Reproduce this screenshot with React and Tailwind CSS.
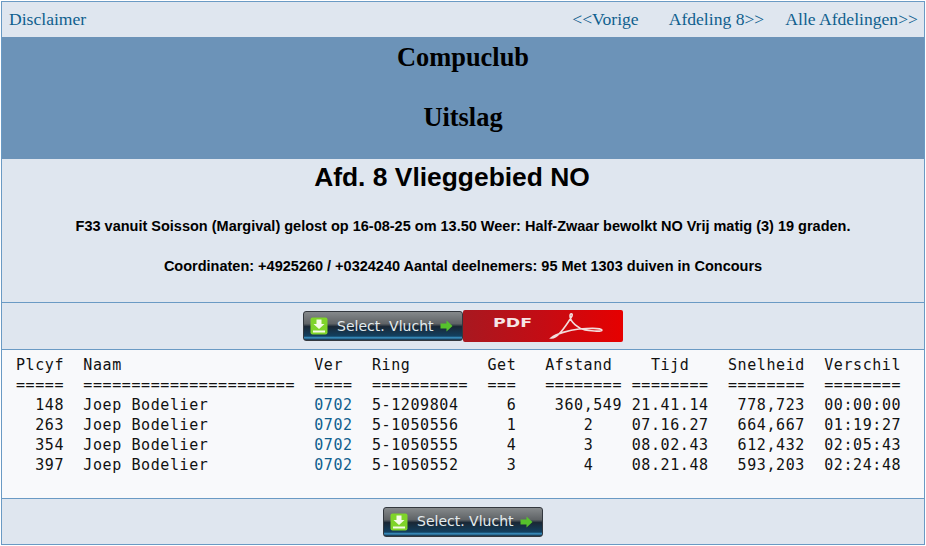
const font = { sans: "font-['Liberation_Sans',Arial,sans-serif]" };

function SelectButton() {
  return (
    <button className="flex h-[30px] w-[160px] items-center rounded-[3px] border border-[#33383e] bg-[linear-gradient(to_bottom,#85898b_0%,#5f6366_42%,#1a2735_52%,#124060_86%,#3a93c4_92%,#14283c_100%)] pl-[6px] font-['DejaVu_Sans',sans-serif] text-[14px] text-[#e3ebee]">
      <svg width="18" height="18" viewBox="0 0 18 18" className="shrink-0">
        <rect x="0.5" y="0.5" width="17" height="17" rx="2" fill="#7fd42a" />
        <path d="M6.5 2.5h5v4.5h3l-5.5 5-5.5-5h3z" fill="#f4fbe6" />
        <rect x="3" y="13.5" width="12" height="2" fill="#f4fbe6" />
      </svg>
      <span className="ml-[9px]">Select. Vlucht</span>
      <svg width="13" height="12" viewBox="0 0 13 12" className="ml-[6px] shrink-0">
        <path d="M0.5 3.5h6V0.5l6 5.5-6 5.5V8.5h-6z" fill="#56c22c" />
      </svg>
    </button>
  );
}

function PdfButton() {
  return (
    <div className="relative h-[32px] w-[160px] rounded-[2px] bg-[linear-gradient(to_right,#a81820,#c40c14_50%,#e60000)]">
      <span className="absolute left-[30px] top-[6px] origin-left scale-x-[1.45] font-['DejaVu_Sans',sans-serif] text-[12px] font-bold leading-[14px] text-[#f6e6e6]">PDF</span>
      <svg width="56" height="30" viewBox="0 0 56 30" className="absolute left-[86px] top-[2px]" fill="none" stroke="#f3dcdc" strokeWidth="1.6">
        <path d="M2 26C8 27 17 14 23 4 24 1 21 1 21 4 21 10 30 17 36 18 44 19 53 20 53 18 52 16 40 16 30 17 20 18 7 22 2 26Z" />
      </svg>
    </div>
  );
}

const rows = [
  ["  148  Joep Bodelier           ", "  5-1209804     6    360,549 21.41.14   778,723  00:00:00"],
  ["  263  Joep Bodelier           ", "  5-1050556     1       2    07.16.27   664,667  01:19:27"],
  ["  354  Joep Bodelier           ", "  5-1050555     4       3    08.02.43   612,432  02:05:43"],
  ["  397  Joep Bodelier           ", "  5-1050552     3       4    08.21.48   593,203  02:24:48"],
];

export default function App() {
  return (
    <div className="m-px flex h-[544px] w-[924px] flex-col border border-[#6a9ac4] bg-[#dfe6ef] text-black">
      <nav className="flex h-[35px] items-center justify-between pl-[7px] pr-[6px] font-['Liberation_Serif',serif] text-[17.6px] text-[#0f5f8e]">
        <a href="#">Disclaimer</a>
        <div className="flex gap-[30px]">
          <a href="#">&lt;&lt;Vorige</a>
          <a href="#">Afdeling 8&gt;&gt;</a>
          <a href="#" className="-ml-[9px]">Alle Afdelingen&gt;&gt;</a>
        </div>
      </nav>

      <header className="h-[122px] bg-[#6c93b8] pt-[4px] text-center font-['Liberation_Serif',serif] text-[26.4px] font-bold leading-[32px]">
        <h1>Compuclub</h1>
        <h2 className="mt-[28px]">Uitslag</h2>
      </header>

      <section className={`h-[144px] border-b border-[#6a9ac4] pt-[3px] text-center font-bold ${font.sans}`}>
        <h2 className="pr-[22px] text-[26.4px] leading-[30px]">Afd. 8 Vlieggebied NO</h2>
        <p className="mt-[25px] text-[14.5px] leading-[18px]">F33 vanuit Soisson (Margival) gelost op 16-08-25 om 13.50 Weer: Half-Zwaar bewolkt NO Vrij matig (3) 19 graden.</p>
        <p className="mt-[22px] text-[14.5px] leading-[18px]">Coordinaten: +4925260 / +0324240 Aantal deelnemers: 95 Met 1303 duiven in Concours</p>
      </section>

      <div className="flex h-[46px] items-center justify-center">
        <SelectButton />
        <PdfButton />
      </div>

      <pre className="h-[150px] border-y border-[#6a9ac4] bg-[#f8f9fb] pl-[14px] pt-[5px] font-['DejaVu_Sans_Mono',monospace] text-[15px] leading-[20px] tracking-[0.59px] text-[#111]">
        {"Plcyf  Naam                    Ver   Ring        Get   Afstand    Tijd    Snelheid  Verschil\n"}
        {"=====  ======================  ====  ==========  ===   ======== ========  ========  ========\n"}
        {rows.map((r, i) => (
          <span key={i}>
            {r[0]}
            <a href="#" className="text-[#0f5f8e]">0702</a>
            {r[1]}
            {"\n"}
          </span>
        ))}
      </pre>

      <div className="flex flex-1 items-center justify-center">
        <SelectButton />
      </div>
    </div>
  );
}
